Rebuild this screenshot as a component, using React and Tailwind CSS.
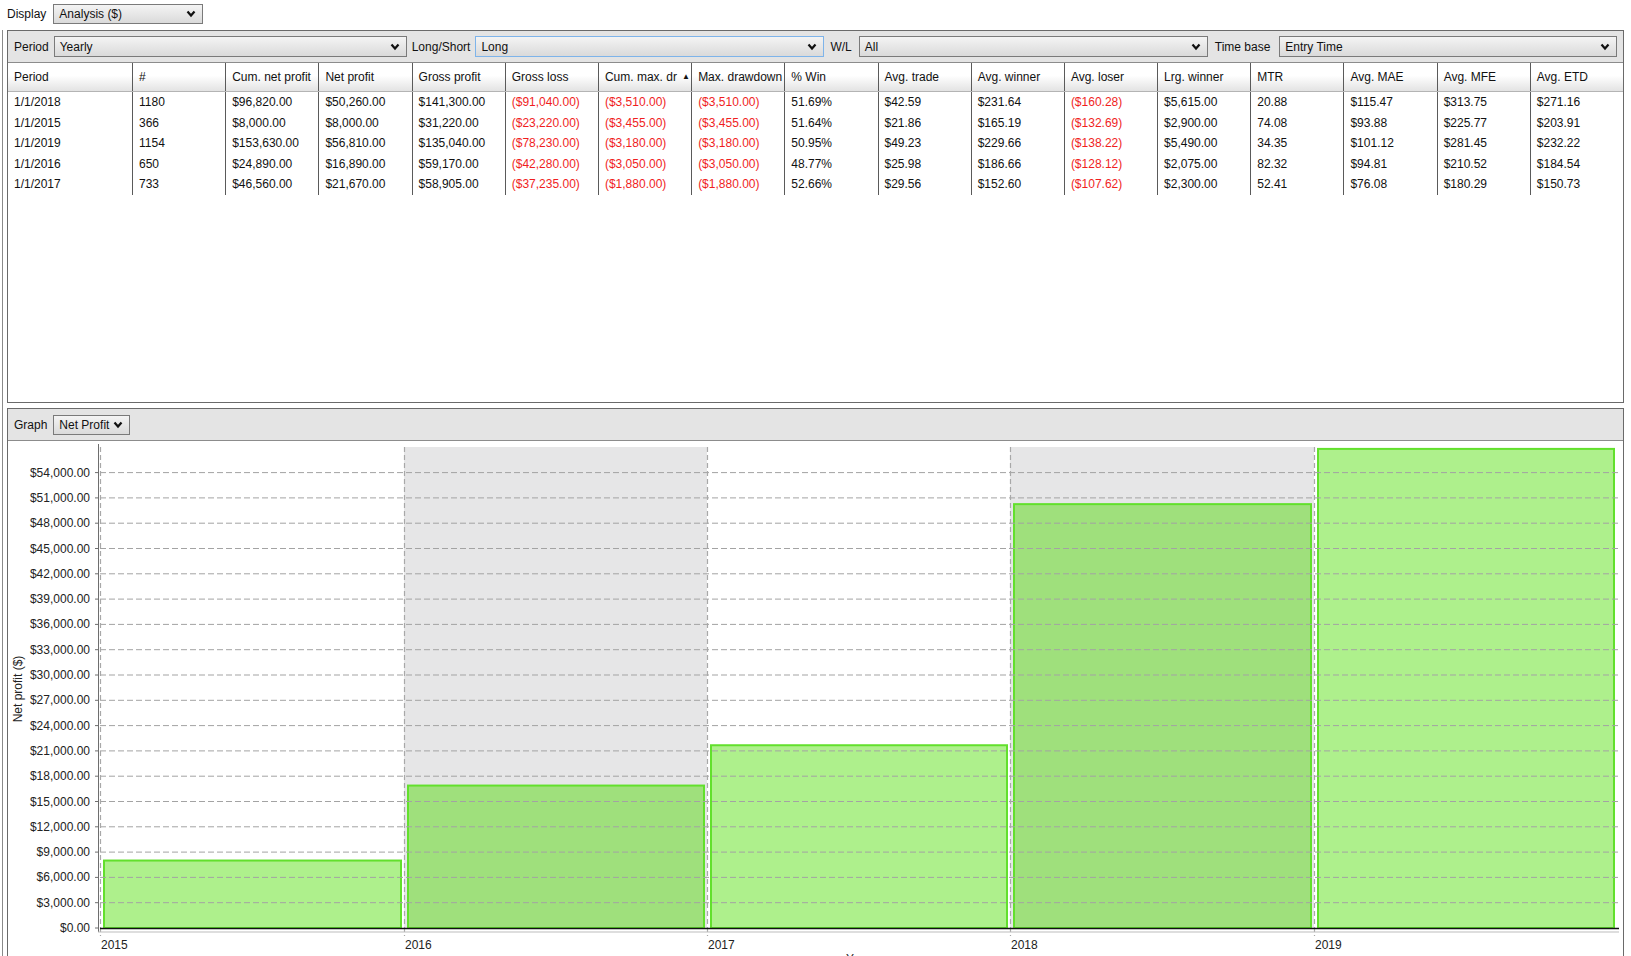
import React from "react";

const Chevron = () => (
  <svg width="10" height="8" viewBox="0 0 10 8" className="shrink-0">
    <path d="M1.5 1.5 L5 5.5 L8.5 1.5" fill="none" stroke="#111" strokeWidth="2.2" />
  </svg>
);

function Select({ text, className = "", blue = false }) {
  return (
    <div
      className={`flex items-center justify-between border ${
        blue ? "border-[#7eb4ea]" : "border-[#7a7a7a]"
      } bg-linear-to-b from-[#f4f4f4] to-[#dadada] pl-[5px] pr-[6px] ${className}`}
    >
      <span className="leading-none">{text}</span>
      <Chevron />
    </div>
  );
}

const headers = [
  "Period",
  "#",
  "Cum. net profit",
  "Net profit",
  "Gross profit",
  "Gross loss",
  "Cum. max. dr",
  "Max. drawdown",
  "% Win",
  "Avg. trade",
  "Avg. winner",
  "Avg. loser",
  "Lrg. winner",
  "MTR",
  "Avg. MAE",
  "Avg. MFE",
  "Avg. ETD",
];

const rows = [
  ["1/1/2018", "1180", "$96,820.00", "$50,260.00", "$141,300.00", "($91,040.00)", "($3,510.00)", "($3,510.00)", "51.69%", "$42.59", "$231.64", "($160.28)", "$5,615.00", "20.88", "$115.47", "$313.75", "$271.16"],
  ["1/1/2015", "366", "$8,000.00", "$8,000.00", "$31,220.00", "($23,220.00)", "($3,455.00)", "($3,455.00)", "51.64%", "$21.86", "$165.19", "($132.69)", "$2,900.00", "74.08", "$93.88", "$225.77", "$203.91"],
  ["1/1/2019", "1154", "$153,630.00", "$56,810.00", "$135,040.00", "($78,230.00)", "($3,180.00)", "($3,180.00)", "50.95%", "$49.23", "$229.66", "($138.22)", "$5,490.00", "34.35", "$101.12", "$281.45", "$232.22"],
  ["1/1/2016", "650", "$24,890.00", "$16,890.00", "$59,170.00", "($42,280.00)", "($3,050.00)", "($3,050.00)", "48.77%", "$25.98", "$186.66", "($128.12)", "$2,075.00", "82.32", "$94.81", "$210.52", "$184.54"],
  ["1/1/2017", "733", "$46,560.00", "$21,670.00", "$58,905.00", "($37,235.00)", "($1,880.00)", "($1,880.00)", "52.66%", "$29.56", "$152.60", "($107.62)", "$2,300.00", "52.41", "$76.08", "$180.29", "$150.73"],
];

function Chart() {
  const W = 1615;
  const H = 515;
  const X = [92, 396, 699, 1002, 1306, 1609];
  const Y0 = 487;
  const TOP = 6;
  const ppd = 25.3 / 3000;
  const y = (v) => Y0 - v * ppd;
  const values = [8000, 16890, 21670, 50260, 56810];
  const years = ["2015", "2016", "2017", "2018", "2019"];
  const ticks = Array.from({ length: 19 }, (_, k) => k * 3000);
  const font = { fontFamily: '"Liberation Sans", Arial, sans-serif', fontSize: 12 };

  return (
    <svg width={W} height={H} className="block" style={{ overflow: "hidden" }}>
      {/* alternating bands */}
      <rect x={X[1]} y={TOP} width={X[2] - X[1]} height={Y0 - TOP} fill="#e6e6e7" />
      <rect x={X[3]} y={TOP} width={X[4] - X[3]} height={Y0 - TOP} fill="#e6e6e7" />

      {/* bars */}
      {values.map((v, i) => (
        <rect
          key={i}
          x={X[i] + 4}
          y={y(v)}
          width={X[i + 1] - X[i] - 7}
          height={Y0 - y(v)}
          fill={i % 2 === 1 ? "#9fe07c" : "#aef08c"}
          stroke="#62e02c"
          strokeWidth="2"
        />
      ))}

      {/* horizontal gridlines */}
      {ticks.map((t, k) =>
        k === 0 ? null : (
          <line
            key={k}
            x1={X[0]}
            x2={X[5] + 2}
            y1={y(t)}
            y2={y(t)}
            stroke="#a3a3a3"
            strokeWidth="1"
            strokeDasharray="6 3"
          />
        )
      )}

      {/* vertical dashed year lines */}
      {X.slice(0, 5).map((x, i) => (
        <line
          key={i}
          x1={x + 0.5}
          x2={x + 0.5}
          y1={TOP}
          y2={Y0 + 8}
          stroke="#a8a8a8"
          strokeWidth="1.2"
          strokeDasharray="5 3"
        />
      ))}

      {/* y axis */}
      <line x1={X[0] - 1.5} x2={X[0] - 1.5} y1={TOP - 3} y2={Y0 + 4} stroke="#6e6e6e" strokeWidth="1" />
      {ticks.map((t, k) => (
        <line key={k} x1={X[0] - 5} x2={X[0] - 1} y1={y(t)} y2={y(t)} stroke="#6e6e6e" strokeWidth="1" />
      ))}

      {/* baseline */}
      <line x1={X[0]} x2={X[5] + 2} y1={Y0 + 0.5} y2={Y0 + 0.5} stroke="#111" strokeWidth="1.5" />
      <line x1={X[0] - 2} x2={X[5] + 2} y1={Y0 + 4} y2={Y0 + 4} stroke="#bdbdbd" strokeWidth="1" />

      {/* y labels */}
      {ticks.map((t, k) => (
        <text key={k} x={82} y={y(t) + 4} textAnchor="end" fill="#222" style={font}>
          {`$${t.toLocaleString("en-US")}.00`}
        </text>
      ))}

      {/* x labels */}
      {years.map((yr, i) => (
        <text key={yr} x={X[i] + 1} y={508} fill="#222" style={font}>
          {yr}
        </text>
      ))}
      <text x={850} y={522} textAnchor="middle" fill="#222" style={font}>
        Year
      </text>
      <text
        x={14}
        y={248}
        textAnchor="middle"
        fill="#222"
        style={font}
        transform="rotate(-90 14 248)"
      >
        Net profit ($)
      </text>
    </svg>
  );
}

export default function App() {
  return (
    <div className="w-[1631px] h-[956px] overflow-hidden bg-white text-[12px] text-[#111] font-['Liberation_Sans',Arial,sans-serif] flex flex-col">
      {/* top bar */}
      <div className="h-[30px] shrink-0 flex items-start pt-[4px] pl-[7px] gap-[7px]">
        <span className="leading-[20px]">Display</span>
        <Select text="Analysis ($)" className="w-[150px] h-[20px]" />
      </div>

      <div className="flex-1 min-h-0 ml-[2px] border-l border-[#8a8a8a] pl-[4px] flex flex-col">
        {/* panel 1 */}
        <div className="w-[1617px] h-[373px] shrink-0 border border-[#6a6a6a] flex flex-col">
          <div className="h-[32px] shrink-0 bg-[#e4e4e4] border-b border-[#8c8c8c] flex items-center pl-[6px] gap-[5px]">
            <span>Period</span>
            <Select text="Yearly" className="w-[353px] h-[21px]" />
            <span>Long/Short</span>
            <Select text="Long" blue className="w-[349px] h-[21px]" />
            <span className="ml-[1px]">W/L</span>
            <Select text="All" className="w-[349px] h-[21px] ml-[2px]" />
            <span className="ml-[2px]">Time base</span>
            <Select text="Entry Time" className="flex-1 h-[21px] mr-[6px] ml-[4px]" />
          </div>

          {/* table header */}
          <div className="grid grid-cols-[124px_repeat(16,1fr)] h-[29px] shrink-0 border-b border-[#b4b4b4] bg-linear-to-b from-white from-45% to-[#e3e3e3]">
            {headers.map((h, i) => (
              <div
                key={h}
                className={`flex items-center px-[6px] whitespace-nowrap overflow-hidden ${
                  i > 0 ? "border-l border-[#5a5a5a]" : ""
                }`}
              >
                {h}
                {h === "Cum. max. dr" && <span className="ml-[5px] text-[8px] leading-none">▲</span>}
              </div>
            ))}
          </div>

          {/* rows */}
          <div className="flex flex-col">
            {rows.map((r, ri) => (
              <div key={ri} className="grid grid-cols-[124px_repeat(16,1fr)] h-[20.5px]">
                {r.map((c, ci) => (
                  <div
                    key={ci}
                    className={`flex items-center px-[6px] whitespace-nowrap ${
                      ci > 0 ? "border-l border-[#5a5a5a]" : ""
                    } ${c.startsWith("(") ? "text-[#f01e1e]" : ""}`}
                  >
                    {c}
                  </div>
                ))}
              </div>
            ))}
          </div>
        </div>

        {/* panel 2 */}
        <div className="w-[1617px] flex-1 min-h-0 mt-[5px] border border-b-0 border-[#6a6a6a] flex flex-col">
          <div className="h-[32px] shrink-0 bg-[#e4e4e4] border-b border-[#8c8c8c] flex items-center pl-[6px] gap-[6px]">
            <span>Graph</span>
            <Select text="Net Profit" className="w-[77px] h-[20px]" />
          </div>
          <div className="flex-1 min-h-0 overflow-hidden">
            <Chart />
          </div>
        </div>
      </div>
    </div>
  );
}
